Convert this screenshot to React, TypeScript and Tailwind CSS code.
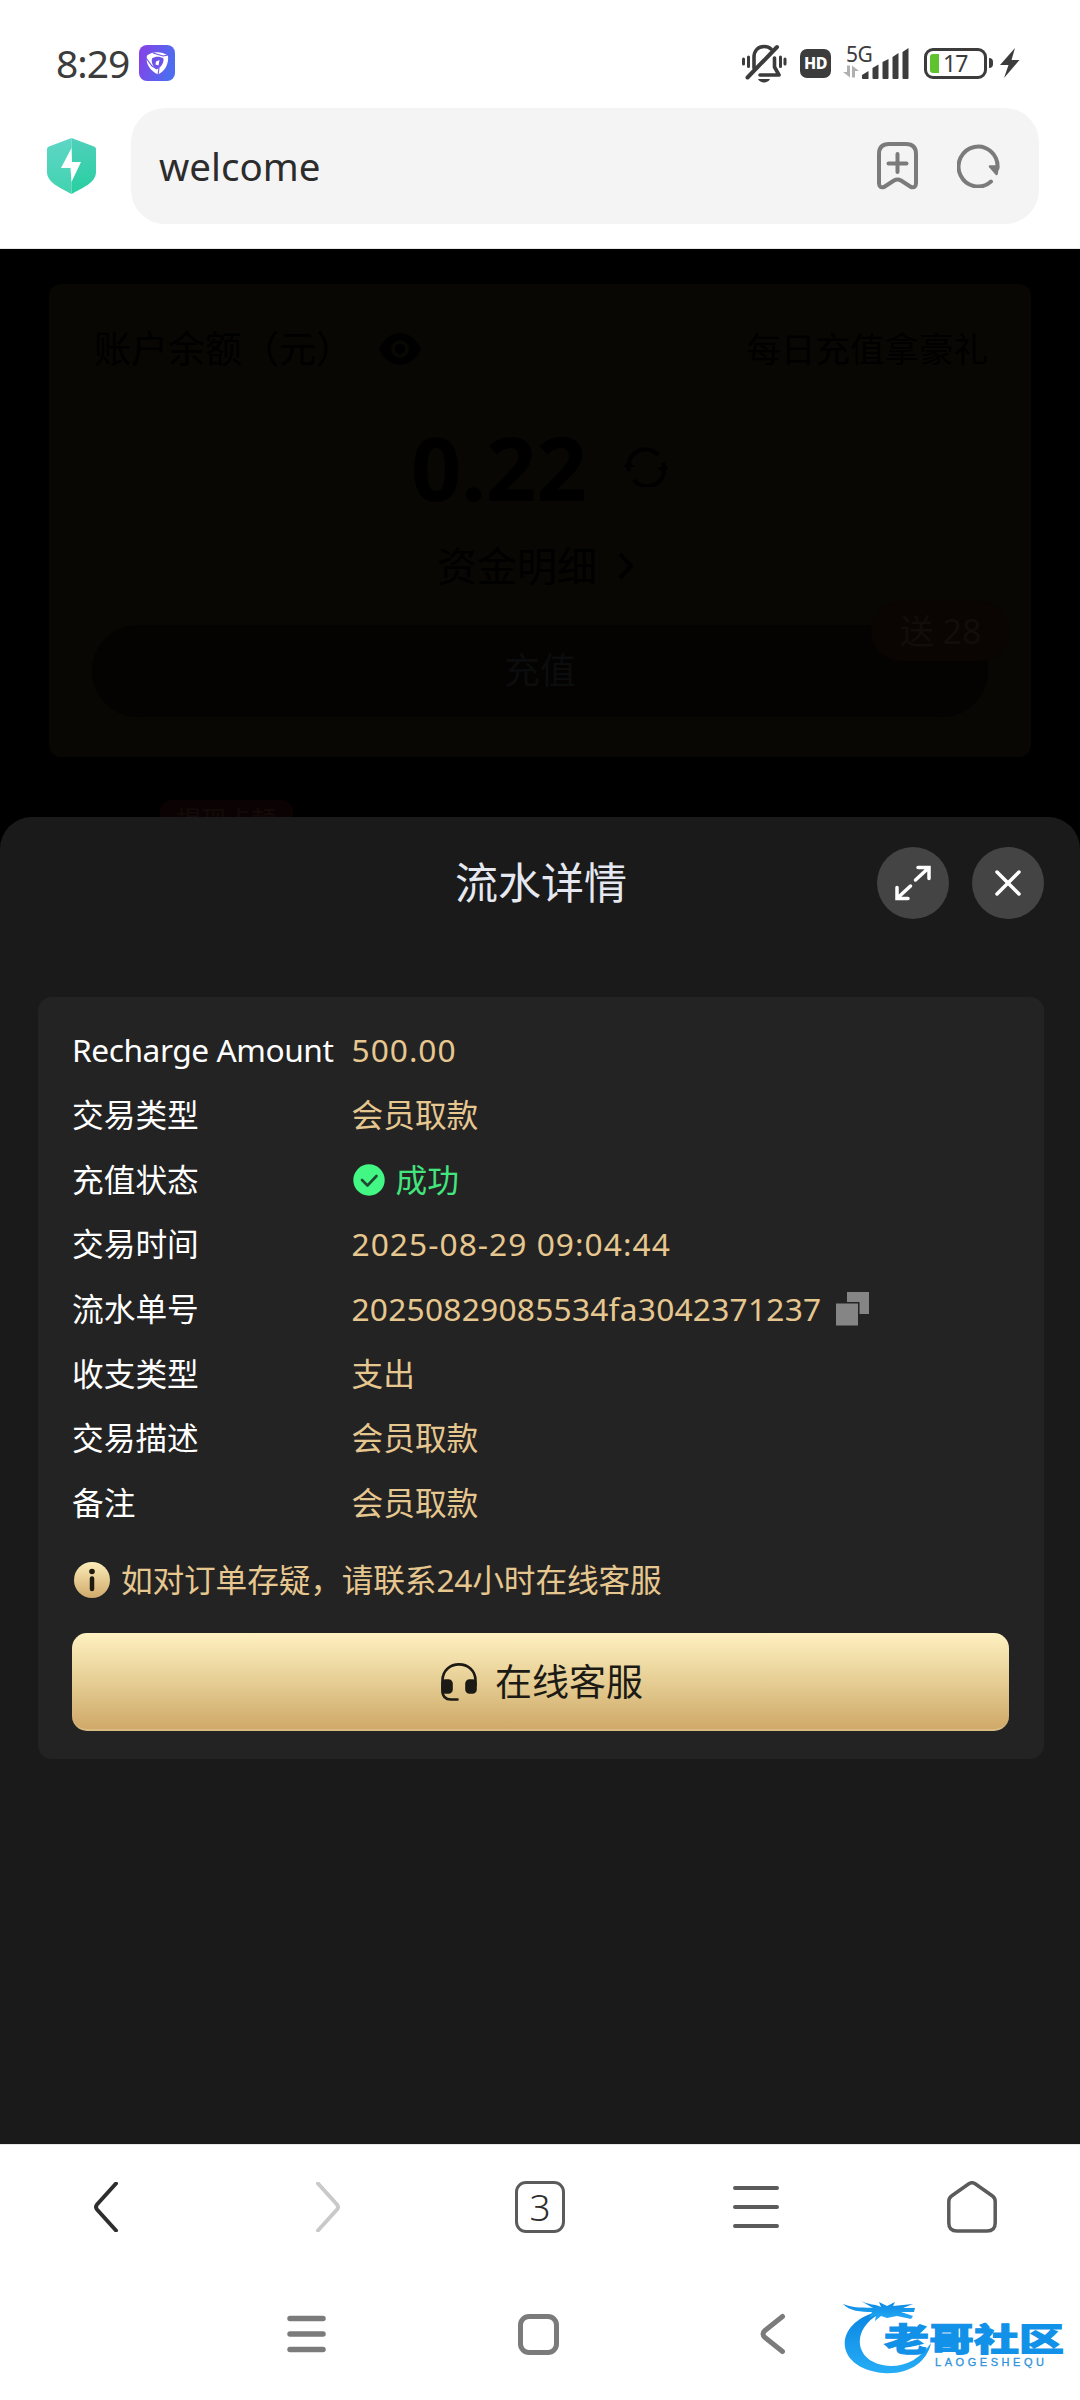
import React from 'react';

interface DetailRow {
  label: string;
  value: string;
  kind?: 'success' | 'copy';
  tracking?: string;
}

const rows: DetailRow[] = [
  { label: 'Recharge Amount', value: '500.00', tracking: 'tracking-[1px]' },
  { label: '交易类型', value: '会员取款' },
  { label: '充值状态', value: '成功', kind: 'success' },
  { label: '交易时间', value: '2025-08-29 09:04:44', tracking: 'tracking-[1.05px]' },
  { label: '流水单号', value: '20250829085534fa3042371237', kind: 'copy', tracking: 'tracking-[0.24px]' },
  { label: '收支类型', value: '支出' },
  { label: '交易描述', value: '会员取款' },
  { label: '备注', value: '会员取款' },
];

const AppBadge = () => (
  <svg className="ml-[7px] h-9 w-9" viewBox="0 0 36 36">
    <defs>
      <linearGradient id="badge" x1="0" y1="0" x2="1" y2="0.3">
        <stop offset="0" stopColor="#8a3fe6" />
        <stop offset="1" stopColor="#4c6df0" />
      </linearGradient>
    </defs>
    <rect width="36" height="36" rx="8" fill="url(#badge)" />
    <path d="M8 10.500C13 6 23 6 29 10.500C30 19 26 26 19 29.500C11 26 6 18 8 10.500Z" fill="#fff" />
    <path d="M13 13.500C16 11 21 11 24.500 13.500C25 18 22 22 18.500 24C14 22 12 18 13 13.500Z" fill="#6c52e6" />
    <path d="M7 13L13 21L18 24M14 8L24 11L29 10M19 30L20 23" stroke="#6c52e6" strokeWidth="1.100" fill="none" />
    <path d="M17 16.500L20.500 15L19.500 20.500L16.500 19.500Z" fill="#fff" />
  </svg>
);

const MutedBell = () => (
  <svg className="h-10 w-[46px]" viewBox="0 0 46 40" fill="none" stroke="#3c3c3c" strokeWidth="3.600" strokeLinecap="round">
    <path d="M13 25V14.500C13 7 17.500 3.500 23.500 3.500C26.500 3.500 28.500 4.500 30 6" />
    <path d="M33.500 15V24L38 32H19" strokeLinejoin="round" />
    <path d="M6.500 34.500L36 4" strokeWidth="4" />
    <path d="M2.500 16V21M7.500 14V23.500M39.500 14V23.500M44 16V21" strokeWidth="3" />
    <path d="M17 36H29C27 40.500 19 40.500 17 36Z" fill="#3c3c3c" stroke="none" />
  </svg>
);

const Signal = () => (
  <div className="ml-3 flex h-8 w-[67px] items-end">
    <div className="relative h-8 w-[19px]">
      <span className="absolute -top-[4px] left-[3px] text-[21px] leading-[22px] tracking-[-0.5px] text-[#3c3c3c]">5G</span>
      <svg className="absolute bottom-[1px] left-0" width="16" height="13" viewBox="0 0 16 13" fill="#b0b0b0">
        <path d="M4 0.500H7V12.500L0 7H4Z" />
        <path d="M9 0.500L16 6H12V12.500H9Z" />
      </svg>
    </div>
    <svg width="47" height="32" viewBox="0 0 47 32" fill="#3c3c3c">
      <path d="M0 28L6.500 24V32H1Q0 32 0 31Z" />
      <path d="M10.500 21L16.500 17.500V31Q16.500 32 15.500 32H11.500Q10.500 32 10.500 31Z" />
      <path d="M20.500 15L26.500 12V31Q26.500 32 25.500 32H21.500Q20.500 32 20.500 31Z" />
      <path d="M30.500 10L36.500 6V31Q36.500 32 35.500 32H31.500Q30.500 32 30.500 31Z" />
      <path d="M40.500 5L46.500 1V31Q46.500 32 45.500 32H41.500Q40.500 32 40.500 31Z" />
    </svg>
  </div>
);

const Battery = () => (
  <div className="ml-[14px] flex items-center">
    <div className="flex h-[31px] w-[63px] items-center rounded-[9px] border-[3px] border-[#3c3c3c] pl-[3px]">
      <div className="h-[19px] w-[9px] rounded-l-[3px] bg-[#5fc22f]" />
      <span className="ml-[4px] text-[23px] leading-[23px] tracking-[-1px] text-[#3c3c3c]">17</span>
    </div>
    <div className="ml-[2px] h-[10px] w-1 rounded-r bg-[#3c3c3c]" />
    <svg className="ml-[7px]" width="20" height="30" viewBox="0 0 20 30" fill="#3c3c3c">
      <path d="M15 0L0 17H8.500L4 30L19.500 12H11.500Z" />
    </svg>
  </div>
);

const StatusBar = () => (
  <div className="flex h-[108px] items-start justify-between pl-14 pr-[60px] pt-[43px]">
    <div className="flex items-center">
      <span className="w-[76px] text-[39px] leading-10 tracking-[-1px] text-[#3c3c3c]">8:29</span>
      <AppBadge />
    </div>
    <div className="flex h-10 items-center">
      <MutedBell />
      <div className="ml-[13px] flex h-[29px] w-[31px] items-center justify-center rounded-[7px] bg-[#3c3c3c] text-[16px] font-extrabold tracking-[-0.5px] text-white">
        HD
      </div>
      <Signal />
      <Battery />
    </div>
  </div>
);

const AddressBar = () => (
  <div className="flex h-[116px] items-center pl-[47px]">
    <svg width="49" height="56" viewBox="0 0 49 56">
      <defs>
        <linearGradient id="shieldL" x1="0" y1="0" x2="0" y2="1">
          <stop offset="0" stopColor="#5ed6c6" />
          <stop offset="1" stopColor="#42d3b0" />
        </linearGradient>
        <linearGradient id="shieldR" x1="0" y1="0" x2="0" y2="1">
          <stop offset="0" stopColor="#4fd0bb" />
          <stop offset="1" stopColor="#28cfa0" />
        </linearGradient>
      </defs>
      <path d="M24.500 0L2 8.500Q0 9.200 0 11V34C0 45 14 50 24.500 56Z" fill="url(#shieldL)" />
      <path d="M24.500 0L47 8.500Q49 9.200 49 11V34C49 45 35 50 24.500 56Z" fill="url(#shieldR)" />
      <path d="M24.500 10L14 30H23.500L24.500 44L34 24H25Z" fill="#fff" />
    </svg>
    <div className="ml-[35px] flex h-[116px] w-[908px] items-center rounded-[34px] bg-[#f4f4f4] pl-7 pr-[39px]">
      <span className="pt-[2px] text-[38.500px] text-[#2c2c2c]">welcome</span>
      <svg className="ml-auto" width="41" height="48" viewBox="0 0 41 48" fill="none" stroke="#7b7b7b" strokeWidth="4" strokeLinecap="round" strokeLinejoin="round">
        <path d="M2 12Q2 2 12 2H29Q39 2 39 12V41Q39 46.500 34 45L24 38.500Q20.500 36.500 17 38.500L7 45Q2 46.500 2 41Z" />
        <path d="M20.500 12V30M11.500 21.500H29.500" />
      </svg>
      <svg className="ml-[39px]" width="43" height="44" viewBox="0 0 43 44" fill="none" stroke="#7b7b7b" strokeWidth="4" strokeLinecap="round">
        <path d="M34 37.500A19.500 20 0 1 1 40.500 24" />
        <path d="M33 22.500H41L39.500 30Z" fill="#7b7b7b" strokeWidth="2.500" strokeLinejoin="round" />
      </svg>
    </div>
  </div>
);

const BalanceCard = () => (
  <div className="mx-[49px] mt-[35px] h-[473px] shrink-0 rounded-xl bg-[#080703] px-[45px] pt-[43px] text-black">
    <div className="flex h-11 items-center justify-between">
      <div className="flex items-center">
        <span className="text-[37px] leading-[44px]">账户余额（元）</span>
        <svg className="ml-[26px]" width="42" height="32" viewBox="0 0 42 32">
          <path d="M0 16C9-5 33-5 42 16C33 37 9 37 0 16Z" fill="#000" />
          <circle cx="21" cy="16" r="9" fill="#080703" />
          <circle cx="21" cy="16" r="5" fill="#000" />
        </svg>
      </div>
      <span className="-mr-[2px] text-[34.500px] leading-[40px]">每日充值拿豪礼</span>
    </div>
    <div className="mt-[46px] flex h-[100px] items-center pl-[317px]">
      <span className="text-[88px] font-bold leading-[100px]">0.22</span>
      <svg className="ml-[36px]" width="46" height="40" viewBox="0 0 46 40" fill="none" stroke="#000" strokeWidth="4">
        <path d="M6 24A17 17 0 0 1 35 8M40 16A17 17 0 0 1 11 33" />
        <path d="M0 20L6 14L12 20ZM34 20L40 26L46 20Z" fill="#000" stroke="none" />
      </svg>
    </div>
    <div className="mt-6 flex h-[50px] items-center pl-[343px]">
      <span className="text-[40px] leading-[50px]">资金明细</span>
      <svg className="ml-[20px]" width="17" height="28" viewBox="0 0 17 28" fill="none" stroke="#000" strokeWidth="4">
        <path d="M3 2L14 14L3 26" />
      </svg>
    </div>
    <div className="relative -mx-[2px] mt-[34px] flex h-[92px] items-center justify-center rounded-full bg-[#040302] text-[36px] text-[#0b0c0d]">
      充值
      <span className="absolute -right-[22px] -top-[24px] flex h-[60px] w-[139px] items-center justify-center rounded-[30px] bg-[#0a0502] text-[34px] text-[#110d0a]">
        送 28
      </span>
    </div>
  </div>
);

const DetailValue: React.FC<{ row: DetailRow }> = ({ row }) => {
  if (row.kind === 'success') {
    return (
      <div className="flex items-center text-[#43e57f]">
        <svg className="ml-[1px] mr-[11px]" width="32" height="32" viewBox="0 0 32 32">
          <circle cx="16" cy="16" r="15.700" fill="#42f784" />
          <path d="M9 16L14.500 21.500L23.500 12" fill="none" stroke="#1f4a30" strokeWidth="2.600" strokeLinecap="round" strokeLinejoin="round" />
        </svg>
        {row.value}
      </div>
    );
  }

  return (
    <div className="flex items-center text-[#e6c78f]">
      <span className={row.tracking}>{row.value}</span>
      {row.kind === 'copy' && (
        <svg className="ml-[15px]" width="33" height="34" viewBox="0 0 33 34" fill="#858585">
          <path d="M11 0H33V22H23.500V10H11Z" />
          <rect y="11.500" width="22" height="22" />
        </svg>
      )}
    </div>
  );
};

const DetailSheet = () => (
  <div className="flex h-[1327px] flex-col rounded-t-[32px] bg-[#1a1a1a] pl-[38px] pr-9 pt-[30px]">
    <div className="relative flex h-[72px] items-center justify-center">
      <h1 className="text-[43px] leading-[60px] text-[#e5e8f0]">流水详情</h1>
      <div className="absolute right-0 top-0 flex gap-[23px]">
        <button className="flex h-[72px] w-[72px] items-center justify-center rounded-full bg-[#444]">
          <svg width="36" height="36" viewBox="0 0 36 36" fill="none" stroke="#fff" strokeWidth="3.500" strokeLinecap="round">
            <path d="M20.500 15L33.500 3M23 2.500H34V13.500M15.500 21L2.500 33M2 22.500V33.500H13" />
          </svg>
        </button>
        <button className="flex h-[72px] w-[72px] items-center justify-center rounded-full bg-[#444]">
          <svg width="26" height="26" viewBox="0 0 26 26" fill="none" stroke="#fff" strokeWidth="3.500" strokeLinecap="round">
            <path d="M2 2L24 24M24 2L2 24" />
          </svg>
        </button>
      </div>
    </div>

    <div className="mt-[78px] h-[762px] rounded-[14px] bg-[#232323] px-[34px] pt-[21px]">
      {rows.map(row => (
        <div key={row.label} className="flex h-[64.700px] items-center text-[31.700px] leading-[40px]">
          <div className="w-[279.500px] whitespace-nowrap text-white">
            <span className={row.label === 'Recharge Amount' ? 'tracking-[-0.45px]' : ''}>{row.label}</span>
          </div>
          <DetailValue row={row} />
        </div>
      ))}

      <div className="mt-6 flex h-10 items-center text-[31.700px] tracking-[-0.15px] text-[#e6c78f]">
        <svg className="ml-[2px] mr-[11px]" width="36" height="36" viewBox="0 0 36 36">
          <defs>
            <linearGradient id="info" x1="0" y1="0" x2="0" y2="1">
              <stop offset="0" stopColor="#fcecb9" />
              <stop offset="1" stopColor="#d0aa6b" />
            </linearGradient>
          </defs>
          <circle cx="18" cy="18" r="18" fill="url(#info)" />
          <circle cx="18" cy="9.500" r="2.800" fill="#1f1a10" />
          <path d="M18 16.500V27" stroke="#1f1a10" strokeWidth="4.500" strokeLinecap="round" />
        </svg>
        如对订单存疑，请联系24小时在线客服
      </div>

      <button className="mt-[33px] flex h-[98px] w-[937px] items-center justify-center rounded-[15px] border-b-2 border-[#d9bb82] bg-linear-to-b from-[#fff1c1] via-[#e6ce94] to-[#cfa969] pl-[3px] pt-[2px] text-[37px] text-[#1c1a14]">
        <svg className="mr-[18px]" width="36" height="38" viewBox="0 0 36 38" fill="none" stroke="#1c1a14" strokeWidth="2.600" strokeLinecap="round">
          <path d="M1.500 30V17.500C1.500 -4 34.500 -4 34.500 17.500V22M1.500 28Q1.500 36.500 10 36.500H16.500" />
          <rect x="1.500" y="17.500" width="9" height="12" rx="3" fill="#1c1a14" />
          <rect x="25.500" y="17.500" width="9" height="12" rx="3" fill="#1c1a14" />
        </svg>
        在线客服
      </button>
    </div>
  </div>
);

const BrowserToolbar = () => (
  <div className="grid h-[124px] grid-cols-5 place-items-center border-t border-[#e6e6e6]">
    <svg className="-ml-[5px]" width="26" height="50" viewBox="0 0 26 50" fill="none" stroke="#2e2e2e" strokeWidth="4" strokeLinecap="round" strokeLinejoin="round">
      <path d="M23 1.500L4 22.500Q2 25 4 27.500L23 48.500" />
    </svg>
    <svg className="ml-[8px]" width="26" height="50" viewBox="0 0 26 50" fill="none" stroke="#c9c9c9" strokeWidth="4" strokeLinecap="round" strokeLinejoin="round">
      <path d="M3 1.500L22 22.500Q24 25 22 27.500L3 48.500" />
    </svg>
    <div className="flex h-[52px] w-[50px] items-center justify-center rounded-[11px] border-[3.500px] border-[#5b5b5b] text-[37px] font-light leading-none text-[#2e2e2e]">
      3
    </div>
    <svg width="46" height="42" viewBox="0 0 46 42" stroke="#5b5b5b" strokeWidth="4" strokeLinecap="round">
      <path d="M2 2H44M2 21H44M2 40H44" />
    </svg>
    <svg width="50" height="52" viewBox="0 0 50 52" fill="none" stroke="#5b5b5b" strokeWidth="3.500" strokeLinejoin="round">
      <path d="M21.500 3Q25 0.500 28.500 3L45.500 15Q48.200 17 48.200 20.500V42Q48.200 50 40 50H10Q1.800 50 1.800 42V20.500Q1.800 17 4.500 15Z" />
    </svg>
  </div>
);

const SiteLogo = () => (
  <svg className="absolute right-[13px] top-[29px]" width="226" height="82" viewBox="0 0 226 82">
    <defs>
      <linearGradient id="logo" x1="0" y1="0" x2="0" y2="1">
        <stop offset="0" stopColor="#0a86e2" />
        <stop offset="1" stopColor="#27adf6" />
      </linearGradient>
    </defs>
    <g fill="url(#logo)">
      <path d="M36 15C-8 26-8 71 42 76C68 78 86 65 90 46C80 61 66 69 50 69C14 68 8 34 38 17Z" />
      <path d="M2 7C14 12 24 10 32 11L20 4C28 8 34 7 40 10L38 5L46 9L54 5L52 9L72 7L62 11L74 11L73 15L60 15L72 19L70 22L56 19L46 21L40 19L34 24L35 18L28 21L31 15C20 15 8 14 2 7Z" />
    </g>
    <text x="43" y="54" textLength="180" lengthAdjust="spacingAndGlyphs" fontSize="32" fontWeight="900" fill="#1191e8" stroke="#1191e8" strokeWidth="1">
      老哥社区
    </text>
    <text x="94" y="69" textLength="109" lengthAdjust="spacing" fontSize="11" fill="#2e93da" stroke="#2e93da" strokeWidth="0.300" className="font-['Liberation_Sans',sans-serif]">
      LAOGESHEQU
    </text>
  </svg>
);

const SystemNav = () => (
  <div className="relative flex h-[132px] items-center pl-[287px]">
    <svg width="39" height="38" viewBox="0 0 39 38" stroke="#7b7b7b" strokeWidth="5.500" strokeLinecap="round">
      <path d="M3 3.500H36M3 19H36M3 34.500H36" />
    </svg>
    <div className="ml-[192px] h-[41px] w-[41px] rounded-[11px] border-[5px] border-[#7b7b7b]" />
    <svg className="ml-[201px]" width="26" height="42" viewBox="0 0 26 42" fill="none" stroke="#7b7b7b" strokeWidth="5" strokeLinecap="round" strokeLinejoin="round">
      <path d="M22.500 3.500L5 17.500Q1 21 5 24.500L22.500 38.500" />
    </svg>
    <SiteLogo />
  </div>
);

export default function App() {
  return (
    <div className="h-[2400px] w-[1080px] overflow-hidden bg-white font-['Noto_Sans','Noto_Sans_CJK_SC',sans-serif]">
      <StatusBar />
      <AddressBar />
      <div className="mt-6 h-[1896px] border-t border-[#e6e6e6] bg-black">
        <div className="flex h-[568px] flex-col overflow-hidden">
          <BalanceCard />
          <div className="ml-[160px] mt-[43px] flex h-[40px] w-[133px] shrink-0 items-start justify-center rounded-t-xl bg-[#0b0303] pt-1 text-[25px] leading-[30px] text-[#150a09]">
            提现卡顿
          </div>
        </div>
        <DetailSheet />
      </div>
      <BrowserToolbar />
      <SystemNav />
    </div>
  );
}
